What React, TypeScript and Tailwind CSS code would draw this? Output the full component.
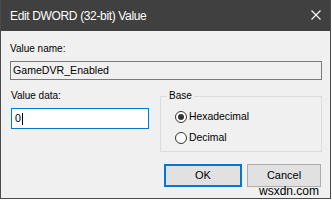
const Radio = ({ label, checked }: { label: string; checked?: boolean }) => (
  <label className="flex h-[21px] items-center gap-[2px]">
    <span className="flex h-[12px] w-[12px] items-center justify-center rounded-full border border-[#333333] bg-white">
      {checked && <span className="h-[6px] w-[6px] rounded-full bg-[#333333]" />}
    </span>
    <span className="text-[10.4px] leading-[12px]">{label}</span>
  </label>
);

const App = () => {
  return (
    <div className="relative h-[200px] w-[332px] overflow-hidden bg-white font-['Liberation_Sans',Arial,sans-serif] text-black">
      <div className="flex h-[199px] w-[331px] flex-col border-x border-b border-[#4b4b4b] bg-[#f0f0f0]">
        {/* Title bar */}
        <div className="flex h-[31px] shrink-0 items-center justify-between bg-[#404040] pl-[9px] pr-[9px]">
          <span className="text-[12px] leading-[14px] tracking-[-0.35px] text-white">
            Edit DWORD (32-bit) Value
          </span>
          <svg width="10" height="10" viewBox="0 0 10 10" className="mb-[1px]">
            <path d="M0.5 0.5 L9.5 9.5 M9.5 0.5 L0.5 9.5" stroke="#ffffff" strokeWidth="1.1" />
          </svg>
        </div>

        {/* Body */}
        <div className="flex flex-col pl-[9px]">
          <div className="mt-[12px] text-[10px] leading-[12px]">Value name:</div>
          <div className="mt-[6px] flex h-[19px] w-[312px] items-center border border-[#7a7a7a] bg-[#f0f0f0] pl-[2px] text-[10.6px]">
            GameDVR_Enabled
          </div>

          <div className="mt-[10px] flex items-start">
            <div className="ml-[1px] flex w-[138px] flex-col">
              <div className="text-[10px] leading-[12px]">Value data:</div>
              <div className="mt-[6px] flex h-[21px] items-center border border-[#0078d7] bg-white pl-[3px] text-[10.6px]">
                <span>0</span>
                <span className="ml-[1px] h-[12px] w-px bg-black" />
              </div>
            </div>

            <fieldset className="ml-[11px] w-[162px] border border-[#dcdcdc] pb-[3px] pt-[4px]">
              <legend className="ml-[6px] px-[2px] text-[10px] leading-[12px]">Base</legend>
              <div className="flex flex-col pl-[14px]">
                <Radio label="Hexadecimal" checked />
                <Radio label="Decimal" />
              </div>
            </fieldset>
          </div>

          <div className="mt-[12px] flex justify-end gap-[5px] pr-[9px]">
            <button className="h-[23px] w-[78px] border-2 border-[#0078d7] bg-[#e1e1e1] text-[11px]">OK</button>
            <button className="h-[23px] w-[74px] border border-[#adadad] bg-[#e1e1e1] text-[11px]">Cancel</button>
          </div>
        </div>
      </div>

      {/* watermark */}
      <span className="absolute left-[259px] top-[185px] text-[12px] leading-[12px] text-black">wsxdn.com</span>
    </div>
  );
};

export default App;
